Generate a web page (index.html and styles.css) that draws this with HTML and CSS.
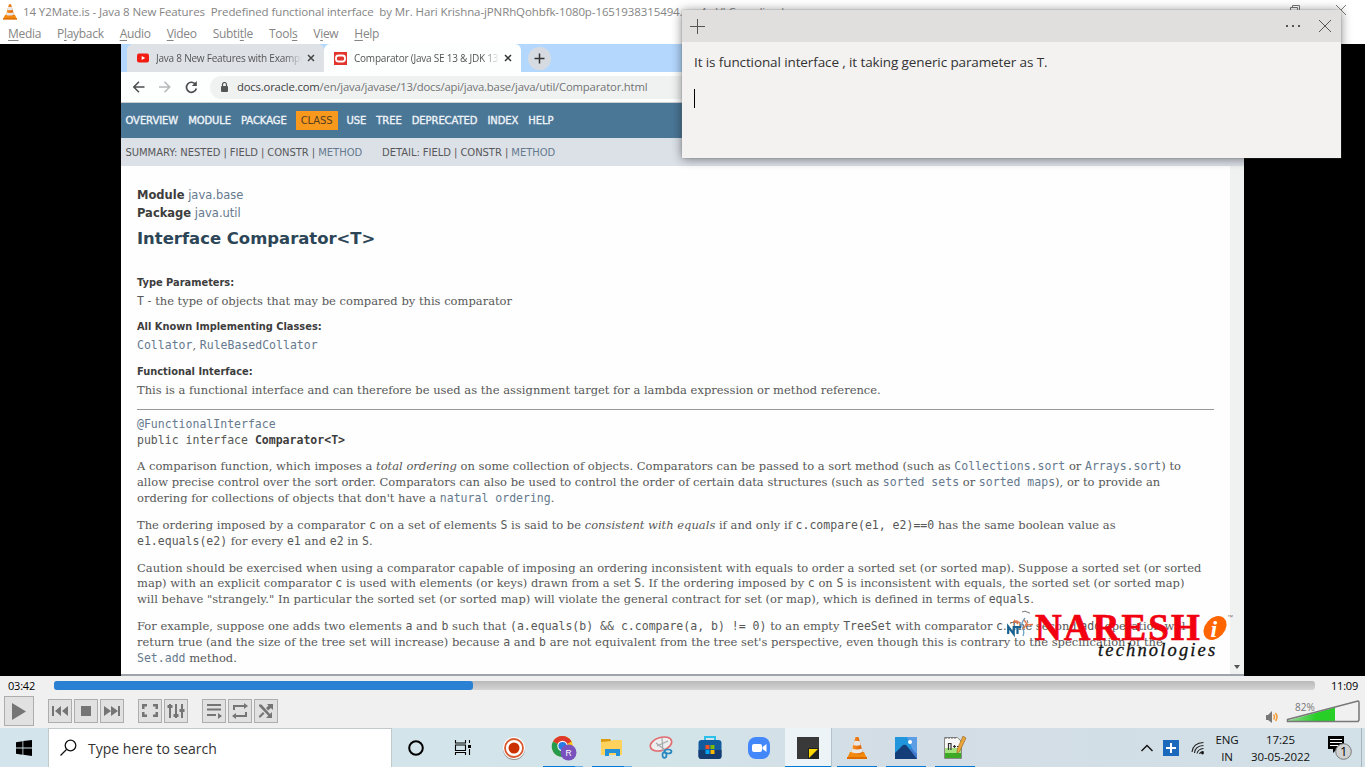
FILE: index.html
```html
<!DOCTYPE html>
<html lang="en">
<head>
<meta charset="utf-8">
<title>VLC media player</title>
<link rel="stylesheet" href="styles.css">
</head>
<body>
<svg width="0" height="0" class="defs">
  <defs>
    <linearGradient id="orange" x1="0" x2="1"><stop offset="0" stop-color="#ff9a2b"/><stop offset="1" stop-color="#d65a00"/></linearGradient>
    <symbol id="cone" viewBox="0 0 20 23">
      <path d="M3 16h14l3 6.500H0z" fill="#f28a10"/><path d="M0 21h20v2H0z" fill="#e06c00"/>
      <path d="M8.500 1h3l4.500 16q-6 3-12 0z" fill="url(#orange)"/>
      <path d="M7.400 5h5.200l1.100 4q-3.700 1.500-7.400 0zM5.300 12.500q4.700 2 9.400 0l1 3.500q-5.700 2.500-11.400 0z" fill="#e8e8e8"/>
    </symbol>
  </defs>
</svg>
<div class="desktop">
  <header class="titlebar">
    <svg class="title-cone"><use href="#cone"/></svg>
    <span class="title">14 Y2Mate.is - Java 8 New Features&nbsp; Predefined functional interface&nbsp; by Mr. Hari Krishna-jPNRhQohbfk-1080p-1651938315494.mp4 - VLC media player</span>
    <svg class="winbtns" width="60" height="20" fill="none" stroke="#777"><path d="M5.500 5.500h7v7h-7zM7.500 5.500v-2h7v7h-2M51 3l10 10M61 3l-10 10"/></svg>
  </header>
  <nav class="menubar">
    <span><u>M</u>edia</span><span>P<u>l</u>ayback</span><span><u>A</u>udio</span><span><u>V</u>ideo</span><span>Subti<u>t</u>le</span><span>Tool<u>s</u></span><span>V<u>i</u>ew</span><span><u>H</u>elp</span>
  </nav>
  <main class="video">
    <div class="frame">
      <div class="tabs">
        <div class="tab tab-one">
          <svg width="12" height="10"><rect width="12" height="9" y=".5" rx="2" fill="#f21c12"/><path d="M4.700 3v4l3.500-2z" fill="#fff"/></svg>
          <span class="tab-text">Java 8 New Features with Exampl</span>
          <svg class="tab-x" width="8" height="8" stroke="#444" stroke-width="1.500"><path d="M1 1l6 6M7 1l-6 6"/></svg>
        </div>
        <div class="tab tab-two">
          <svg width="13" height="13"><rect width="13" height="13" fill="#e2352d"/><rect x="2" y="3.500" width="9" height="6" rx="2.500" fill="none" stroke="#fff" stroke-width="1.800"/></svg>
          <span class="tab-text">Comparator (Java SE 13 &amp; JDK 13</span>
          <svg class="tab-x" width="8" height="8" stroke="#333" stroke-width="1.500"><path d="M1 1l6 6M7 1l-6 6"/></svg>
        </div>
        <div class="newtab"><svg width="11" height="11" stroke="#333" stroke-width="1.500"><path d="M5.500 .500v10M.5 5.500h10"/></svg></div>
      </div>
      <div class="toolbar">
        <svg width="72" height="14" fill="none" stroke-width="1.500"><path d="M12.500 7H2M7 1.800L1.800 7 7 12.200" stroke="#4a4c4f"/><path d="M27 7h10.500M32.500 1.800L37.700 7l-5.200 5.200" stroke="#b5b7b8"/><path d="M63.500 4.300a5 5 0 1 0 .8 4.200" stroke="#4a4c4f" stroke-width="1.700"/><path d="M64.800 1v5h-5z" fill="#4a4c4f"/></svg>
        <div class="omnibox"><svg width="8" height="10"><rect y="4" width="7" height="6" rx="1" fill="#555"/><path d="M1.500 4.500v-2a2 2 0 0 1 4 0v2" fill="none" stroke="#555" stroke-width="1.200"/></svg><span class="url"><b>docs.oracle.com</b>/en/java/javase/13/docs/api/java.base/java/util/Comparator.html</span></div>
      </div>
      <div class="topnav"><span>OVERVIEW</span><span>MODULE</span><span>PACKAGE</span><span class="active">CLASS</span><span>USE</span><span>TREE</span><span>DEPRECATED</span><span>INDEX</span><span>HELP</span></div>
      <div class="subnav"><span>SUMMARY: NESTED | FIELD | CONSTR | <a>METHOD</a></span><span>DETAIL: FIELD | CONSTR | <a>METHOD</a></span></div>
      <div class="page">
        <article class="doc">
          <div class="modline"><b>Module</b> <a>java.base</a></div>
          <div class="modline"><b>Package</b> <a>java.util</a></div>
          <h2>Interface Comparator&lt;T&gt;</h2>
          <dl>
            <dt>Type Parameters:</dt><dd><code>T</code> - the type of objects that may be compared by this comparator</dd>
            <dt>All Known Implementing Classes:</dt><dd><code><a>Collator</a></code>, <code><a>RuleBasedCollator</a></code></dd>
            <dt>Functional Interface:</dt><dd>This is a functional interface and can therefore be used as the assignment target for a lambda expression or method reference.</dd>
          </dl>
          <hr>
          <pre><a>@FunctionalInterface</a>
public interface <b>Comparator&lt;T&gt;</b></pre>
          <p>A comparison function, which imposes a <i>total ordering</i> on some collection of objects. Comparators can be passed to a sort method (such as <code><a>Collections.sort</a></code> or <code><a>Arrays.sort</a></code>) to<br>allow precise control over the sort order. Comparators can also be used to control the order of certain data structures (such as <code><a>sorted sets</a></code> or <code><a>sorted maps</a></code>), or to provide an<br>ordering for collections of objects that don't have a <code><a>natural ordering</a></code>.</p>
          <p>The ordering imposed by a comparator <code>c</code> on a set of elements <code>S</code> is said to be <i>consistent with equals</i> if and only if <code>c.compare(e1, e2)==0</code> has the same boolean value as<br><code>e1.equals(e2)</code> for every <code>e1</code> and <code>e2</code> in <code>S</code>.</p>
          <p>Caution should be exercised when using a comparator capable of imposing an ordering inconsistent with equals to order a sorted set (or sorted map). Suppose a sorted set (or sorted<br>map) with an explicit comparator <code>c</code> is used with elements (or keys) drawn from a set <code>S</code>. If the ordering imposed by <code>c</code> on <code>S</code> is inconsistent with equals, the sorted set (or sorted map)<br>will behave "strangely." In particular the sorted set (or sorted map) will violate the general contract for set (or map), which is defined in terms of <code>equals</code>.</p>
          <p>For example, suppose one adds two elements <code>a</code> and <code>b</code> such that <code>(a.equals(b) &amp;&amp; c.compare(a, b) != 0)</code> to an empty <code>TreeSet</code> with comparator <code>c</code>. The second <code>add</code> operation will<br>return true (and the size of the tree set will increase) because <code>a</code> and <code>b</code> are not equivalent from the tree set's perspective, even though this is contrary to the specification of the<br><code><a>Set.add</a></code> method.</p>
        </article>
        <div class="scroll"><svg width="6" height="4"><path d="M0 0h6L3 4z" fill="#555"/></svg></div>
      </div>
      <div class="logo">
        <svg width="30" height="32" viewBox="0 0 30 32" fill="none"><path d="M3.200 25v-7.500l5.500 7.500v-8M8 18.200h8M12.500 18v7" stroke="#17608f" stroke-width="2.200"/><path d="M20 9q-4 5-3 9 3 5 1 9" stroke="#6fa0c2" stroke-width="1.300"/><path d="M8 13l4-1 3 2M9 11l4 4M20 16l8-.5M19 11l3 4-4 5" stroke="#de7850" stroke-width="1.400"/><path d="M17 3l3-.8 5 2M22 11l1 3" stroke="#777"/></svg>
        <span class="naresh">NARESH</span>
        <svg class="logo-i" width="31" height="30"><ellipse cx="13" cy="16" rx="9.800" ry="13.300" transform="rotate(42 13 16)" fill="#ff6500"/><text x="8.500" y="25" class="i-text">i</text><text x="25" y="7" class="tm">™</text></svg>
        <span class="tech">technologies</span>
      </div>
    </div>
  </main>
  <section class="controls">
    <div class="seekrow"><span class="time">03:42</span><div class="seek"><div class="played"></div></div><span class="time">11:09</span></div>
    <div class="buttons">
      <div class="btn play"><svg width="28" height="28"><path d="M7 6l14 8.500L7 23z"/></svg></div>
      <div class="btn g1"><svg viewBox="0 0 22 22"><path d="M3 6h2v10H3zM12 6v10l-6-5zM19 6v10l-6-5z"/></svg></div>
      <div class="btn"><svg viewBox="0 0 22 22"><path d="M6 6h10v10H6z"/></svg></div>
      <div class="btn"><svg viewBox="0 0 22 22"><path d="M17 6h2v10h-2zM3 6v10l7-5zM10 6v10l7-5z"/></svg></div>
      <div class="btn g2"><svg viewBox="0 0 22 22"><path d="M3 4h5v2.500H5.500V9H3zM14 4h5v5h-2.500V6.500H14zM3 12h2.500v2.500H8V17H3zM16.500 12H19v5h-5v-2.500h2.500z"/></svg></div>
      <div class="btn"><svg viewBox="0 0 22 22"><path d="M4 4h2v14H4zM10 4h2v14h-2zM16 4h2v14h-2zM2.500 5h5v3h-5zM8.500 14h5v3h-5zM14.500 9h5v3h-5z"/></svg></div>
      <div class="btn g3"><svg viewBox="0 0 22 22"><path d="M4 4h14v2H4zM4 8.500h14v2H4zM4 14h9v2H4zM15 13l4 3-4 3z"/></svg></div>
      <div class="btn"><svg viewBox="0 0 22 22"><path d="M4 10V5h11V3l4 3-4 3V7H6v3zM18 12v5H7v2l-4-3 4-3v2h9v-3z"/></svg></div>
      <div class="btn"><svg viewBox="0 0 22 22"><path d="M4 4.500h2.500L15 14l2-2v6h-6l2.300-2.300L4 6zM4 16l4-4 1.500 1.500-4 4H4zM11 8l2.500-2.500L12 4h6v6l-2-2-3 2.500z"/></svg></div>
      <div class="volume">
        <svg width="14" height="14"><path d="M1 5h2l4-4v12L3 10H1z" fill="#777"/><path d="M8.500 4.500q2 2.500 0 5M10.500 3q3 4 0 8" fill="none" stroke="#f39a32" stroke-width="1.500"/></svg>
        <svg width="76" height="26"><defs><linearGradient id="vol"><stop stop-color="#96d596"/><stop offset=".6" stop-color="#27cf27"/></linearGradient></defs><path d="M3 21.500L50 8.500v13.500H3z" fill="url(#vol)"/><path d="M2.500 20.500L73 2q1 0 1 1.500V21l-1 1.500H2.500z" fill="none" stroke="#777" stroke-width="1.500"/><text x="10" y="12" class="voltext">82%</text></svg>
      </div>
    </div>
  </section>
  <footer class="taskbar">
    <div class="start"><svg width="16" height="16"><path d="M0 2.200L6.500 1.300V7.500H0zM7.300 1.100L16 0v7.500H7.300zM0 8.500h6.500v6.200L0 13.800zM7.300 8.500H16V16l-8.700-1.200z"/></svg></div>
    <div class="search"><svg width="18" height="18" fill="none" stroke="#111" stroke-width="1.300"><circle cx="10.500" cy="6.500" r="5.300"/><path d="M6.500 10.500L.5 16.500"/></svg><span>Type here to search</span></div>
    <div class="apps">
      <div class="app"><svg width="18" height="18"><circle cx="9" cy="9" r="6.800" fill="none" stroke="#000" stroke-width="2"/></svg></div>
      <div class="app taskview"><svg width="18" height="18" fill="none" stroke="#000" stroke-width="1.100"><path d="M1.500 1v3h10V1M1.500 16v-2.500h10V16M1.500 6h10v5.500h-10zM15.500 1v3M15.500 10v6"/><path d="M14 6h3v3h-3z" fill="#000" stroke="none"/></svg></div>
      <div class="app"><svg width="24" height="24"><circle cx="12" cy="13" r="11" fill="#8f8b89"/><circle cx="12" cy="12" r="11" fill="#fff"/><circle cx="12" cy="12" r="9" fill="none" stroke="#d8592f" stroke-width="1.800"/><circle cx="12" cy="12" r="5.500" fill="#cb3003"/></svg></div>
      <div class="app run split"><svg class="chrome" width="26" height="26"><circle cx="11.500" cy="11.500" r="10.500" fill="#fbc116"/><path d="M11.500 11.500L2 6.500a10.500 10.500 0 0 1 18.500 0z" fill="#df392b"/><path d="M11.500 11.500L2 6.500a10.500 10.500 0 0 0 9 15.500z" fill="#279b4c"/><circle cx="11.500" cy="11" r="5.200" fill="#fff"/><circle cx="11.500" cy="11" r="4.100" fill="#287be5"/><circle cx="17.500" cy="17.500" r="8" fill="#7952bd"/><text x="14.500" y="20.700" class="badge-r">R</text></svg></div>
      <div class="app run split"><svg width="24" height="22"><path d="M1 2h9l2 3H1z" fill="#d99a0d"/><path d="M1 5l11-1 1-1h9v15H1z" fill="#ffd25d"/><path d="M5 12h15v7h-4v-3H9v3H5z" fill="#2490d8"/></svg></div>
      <div class="app"><svg width="26" height="26" fill="none"><ellipse cx="13" cy="9" rx="11" ry="6.500" transform="rotate(-17 13 9)" fill="#eee" stroke="#e06b70" stroke-width="1.600"/><path d="M14 3l1 13M8 8l9 7M9 11l11-5" stroke="#a5a9ab" stroke-width="1.200"/><ellipse cx="20" cy="16.500" rx="3.500" ry="2" stroke="#2686be" stroke-width="1.700"/><ellipse cx="16.500" cy="20" rx="2" ry="2.800" stroke="#2686be" stroke-width="1.700"/></svg></div>
      <div class="app"><svg width="24" height="25"><path d="M7 6V2h10v4" fill="none" stroke="#2cc1eb" stroke-width="2"/><rect x=".5" y="5" width="23" height="19" rx="3" fill="#125b9d"/><path d="M.5 15h23v6q0 3-3 3h-17q-3 0-3-3z" fill="#173c70"/><path d="M7.500 10h4v4h-4z" fill="#f25022"/><path d="M12.500 10h4v4h-4z" fill="#7fba00"/><path d="M7.500 15h4v4h-4z" fill="#00a4ef"/><path d="M12.500 15h4v4h-4z" fill="#ffb900"/></svg></div>
      <div class="app"><svg width="24" height="24"><rect x="1" y="1" width="22" height="22" rx="8" fill="#4388fa"/><rect x="5" y="8" width="10" height="8" rx="2" fill="#fff"/><path d="M15.500 11l4-3v8l-4-3z" fill="#fff"/></svg></div>
      <div class="app selected run"><svg width="22" height="22"><path d="M0 0h22v11L11 22H0z" fill="#393939"/><path d="M11 11h11v11H11z" fill="#222"/><path d="M12 12h9l-9 9z" fill="#ffd800"/></svg></div>
      <div class="app run"><svg width="20" height="23"><use href="#cone"/></svg></div>
      <div class="app run"><svg width="22" height="22"><rect width="22" height="22" fill="#2196dc"/><path d="M12 0h10v22z" fill="#5c9de6"/><path d="M14 13l2-2 6 6v5h-8z" fill="#4279cf"/><path d="M0 16l8-8q2-1 4 1l10 13H0z" fill="#153e79"/><circle cx="15" cy="5" r="2" fill="#fff"/></svg></div>
      <div class="app run"><svg width="24" height="24"><path d="M1.500 1.500h13l4 4v17h-17z" fill="#a5e37f" stroke="#888"/><path d="M2 2h12.500l3.500 4v6H2z" fill="#f7f7f7"/><path d="M3 1v2M6 1v2M9 1v2M12 1v2" stroke="#666"/><path d="M2 17h16v5H2z" fill="#3caa25"/><path d="M5.500 14V7.500H8V14M10 10.500h3M11.500 9v3M14 10.500h2" stroke="#333" fill="none" stroke-width="1.200"/><path d="M20 0l3 2-6 13-3 2.500.3-4.500z" fill="#e9a43b" stroke="#93621e" stroke-width=".6"/></svg></div>
    </div>
    <div class="tray">
      <svg width="12" height="8" fill="none" stroke="#111" stroke-width="1.400"><path d="M.5 7L6 1.500 11.500 7"/></svg>
      <svg width="16" height="16"><path d="M0 0h16v16H0z" fill="#1b69bd"/><path d="M8 3v10M3 8h10" stroke="#fff" stroke-width="2"/></svg>
      <svg class="wifi" width="14" height="14" fill="none" stroke="#222" stroke-width="1.100"><path d="M1 11Q2 2 12.500 1.500M3.500 12Q4 5 12.500 4.500M6 12.500Q7 8 12.500 7.500M8.500 13q1-2.500 4-2.500"/><circle cx="11.500" cy="12" r="1.400" fill="#111" stroke="none"/></svg>
      <div class="lang">ENG<br>IN</div><div class="clock">17:25<br>30-05-2022</div>
      <svg class="action" width="26" height="26"><path d="M1 1h16v13h-7l-4 4v-4H1z"/><path d="M3 4.500h12M3 7.500h12M3 10.500h9" stroke="#fff"/><circle cx="16.500" cy="16.500" r="7.800" fill="#d0d2d2" stroke="#777"/><text x="13" y="21" class="notif">1</text></svg>
    </div>
    <div class="showdesk"></div>
  </footer>
  <aside class="note">
    <div class="note-head"><svg width="15" height="15" stroke="#555"><path d="M7.500 0v15M0 7.500h15"/></svg><svg width="50" height="14" stroke="#555" fill="none"><path d="M37 1l12 12M49 1L37 13"/><path d="M4 6h2v2H4zM10 6h2v2h-2zM16 6h2v2h-2z" fill="#555" stroke="none"/></svg></div>
    <div class="note-body"><div class="note-text">It is functional interface , it taking generic parameter as T.</div><div class="caret"></div></div>
  </aside>
</div>
</body>
</html>
```
FILE: styles.css
```css
* { box-sizing: border-box; }
body { margin: 0; overflow: hidden; font-family: "Open Sans", "Noto Sans", sans-serif; }
.defs { position: absolute; }
svg { display: block; flex: none; }
.desktop { position: relative; width: 1365px; height: 767px; display: flex; flex-direction: column; background: #fff; overflow: hidden; white-space: nowrap; }

.titlebar { height: 23px; display: flex; align-items: center; padding-left: 3px; color: #858585; }
.title-cone { width: 14px; height: 17px; margin-right: 6px; }
.title { font-size: 11.5px; letter-spacing: -.1px; }
.winbtns { margin-left: auto; margin-right: 20px; overflow: visible; }
.menubar { height: 21px; display: flex; gap: 16px; padding: 2px 0 0 8px; font-size: 12px; line-height: 17px; color: #858585; letter-spacing: -.3px; }
.menubar u { text-underline-offset: 2px; }

.video { height: 632px; padding: 0 121px; background: #000; }
.frame { position: relative; width: 1123px; height: 632px; display: flex; flex-direction: column; background: #fdfefd; overflow: hidden; color: #585858; }
.tabs { height: 28px; display: flex; background: #b3d7fd; padding-left: 6px; font-size: 10px; }
.tab { display: flex; align-items: center; height: 28px; padding: 0 9px 0 10px; border-radius: 6px 6px 0 0; }
.tab-one { width: 197px; background: #dee1e6; }
.tab-two { width: 197px; background: #fdfefe; }
.tab-text { width: 146px; margin-left: 7px; letter-spacing: -.22px; mask-image: linear-gradient(90deg, #000 88%, transparent 100%); color: #555; }
.tab-x { margin-left: auto; }
.newtab { width: 23px; height: 23px; border-radius: 50%; background: #d6dbe2; margin: 3px 0 0 7px; display: flex; align-items: center; justify-content: center; }
.toolbar { height: 31px; display: flex; align-items: center; padding-left: 11px; border-bottom: 1px solid #ccd0d2; background: #fdfefe; }
.omnibox { flex: 1; height: 23px; margin-left: 6px; padding: 0 0 1px 11px; display: flex; align-items: center; gap: 8px; border-radius: 12px 0 0 12px; background: #f0f2f2; font-size: 11.3px; letter-spacing: -.19px; color: #707274; }
.url b { font-weight: 400; color: #3e4043; }
.topnav { height: 35px; background: #4b7797; color: #eef4f8; display: flex; align-items: center; gap: 10px; padding-left: 4.500px; font: 10px "DejaVu Sans", sans-serif; letter-spacing: -.08px; -webkit-text-stroke: .35px currentColor; }
.active { background: #f8981d; color: #574020; padding: 4px 5px; margin: 0 -1px; -webkit-text-stroke: 0; }
.subnav { height: 28px; background: #dce1e8; display: flex; align-items: center; gap: 20px; padding-left: 4.500px; font: 10px "DejaVu Sans", sans-serif; letter-spacing: -.06px; }
a { color: #66798e; }
.page { flex: 1; display: flex; border-bottom: 2px solid #9ea4aa; min-height: 0; }
.doc { width: 1109px; padding: 20px 16px 0 16px; font: 11.5px/15.7px "DejaVu Serif", serif; }
.modline { font: 11.5px/18px "DejaVu Sans", sans-serif; }
.modline b, dt, pre b { color: #3d3d3d; }
.doc h2 { margin: 7px 0 0; font: 700 16.45px/20px "DejaVu Sans", sans-serif; color: #2c4557; }
dl { margin: 26px 0 0; }
dt { font: 700 9.85px/16px "DejaVu Sans", sans-serif; }
dd { margin: 2px 0 10.400px; line-height: 16px; }
.doc hr { margin: 11px 0 7px; border: 0; border-top: 1px solid #999; height: 1px; }
code, pre { font: 11.52px/15.7px "DejaVu Sans Mono", monospace; line-height: 1; }
pre { margin: 0 0 11px; line-height: 15.8px; }
.doc p { margin: 0 0 11.400px; }
.scroll { width: 14px; background: #f0f1f1; display: flex; align-items: flex-end; justify-content: center; padding-bottom: 5px; }
.logo { position: absolute; left: 884px; top: 565px; width: 230px; height: 60px; display: flex; }
.naresh { font: 700 37px/37px "Liberation Serif", serif; letter-spacing: 2.100px; color: #f20010; margin-top: 0; -webkit-text-stroke: .7px #f20010; }
.logo-i { margin-left: 0; margin-top: 3px; }
.i-text { font: italic 700 24px "Liberation Serif", serif; fill: #fff; }
.tm { font: 6px "Liberation Sans", sans-serif; fill: #777; }
.tech { position: absolute; left: 93px; top: 31px; font: italic 18.5px/20px "Liberation Serif", serif; letter-spacing: 2.150px; color: #111; -webkit-text-stroke: .3px #111; }

.controls { height: 52px; background: #f0f0f0; }
.seekrow { display: flex; height: 19px; align-items: center; padding: 0 4px 0 8px; font-size: 11px; color: #000; }
.time { width: 30px; letter-spacing: -.2px; }
.seek { flex: none; height: 9px; width: 1261px; margin: 0 16px 1px 16px; border-radius: 3px; background: linear-gradient(#b9b9b9, #d5d5d5); }
.played { width: 419px; height: 9px; border-radius: 3px; background: #2a80d2; }
.buttons { display: flex; align-items: center; height: 32px; padding-left: 4px; }
.btn { width: 24px; height: 24px; margin-right: 2px; border: 1px solid #adadad; background: #e1e1e1; }
.btn svg { fill: #757575; }
.play { width: 30px; height: 30px; margin-right: 0; }
.g1 { margin-left: 14px; }
.g2, .g3 { margin-left: 12px; }
.volume { display: flex; align-items: flex-end; margin-left: auto; gap: 6px; padding: 0 4px 1px 0; height: 30px; }
.volume svg:first-child { margin-bottom: 1px; }
.voltext { font: 10px "Open Sans", sans-serif; fill: #777; }

.taskbar { height: 39px; display: flex; background: linear-gradient(90deg, #d3e4ec, #d3e4e9 50%, #d3dde5 65%, #d2e0e7); }
.start { width: 48px; display: flex; align-items: center; justify-content: center; }
.search { width: 344px; background: #fff; border: 1px solid #c3c8ca; border-bottom: 0; display: flex; align-items: center; gap: 10px; padding-left: 11px; font-size: 14px; letter-spacing: 0; color: #333; }
.apps { display: flex; }
.app { width: 49px; display: flex; align-items: center; justify-content: center; position: relative; }
.app:first-child { margin-left: -1px; }
.taskview { left: -2px; }
.chrome { margin-left: 3px; }
.run::after { content: ""; position: absolute; left: 5px; bottom: 0; width: 40px; height: 1px; background: #0078d7; }
.split::after { background: linear-gradient(90deg, #0078d7 80%, #65aee6 80%); }
.selected { background: #edf4f8; border-right: 1px solid #b4c2cc; margin-left: 2px; width: 47px; }
.selected::after { left: 0; width: 46px; }
.selected ~ .app:not(.selected) { margin-left: 0; }
.selected + .app { padding-left: 1px; }
.tray { margin-left: auto; display: flex; align-items: center; padding-right: 8px; color: #111; font-size: 11.5px; line-height: 17px; text-align: center; gap: 10px; }
.wifi { margin-left: 2px; }
.lang { letter-spacing: -.2px; width: 24px; margin-right: 2px; }
.clock { letter-spacing: -.1px; margin-right: 7px; }
.showdesk { width: 4px; border-left: 1px solid #a9b5bc; }
.notif { font: 13px "Open Sans", sans-serif; }
.badge-r { font: 8.500px "Liberation Sans", sans-serif; fill: #fff; }

.note { position: absolute; left: 682px; top: 10px; width: 659px; height: 148px; background: #f3f2f1; box-shadow: 0 1px 10px rgba(0,0,0,.48), 0 0 1px #999; }
.note-head { height: 32px; background: #e0dfde; display: flex; justify-content: space-between; align-items: center; padding: 0 9px 0 8px; }
.note-body { padding: 10px 12px; color: #333; font-size: 13.5px; line-height: 20px; }
.note-text { letter-spacing: -.11px; }
.caret { width: 1px; height: 19px; margin-top: 17px; background: #000; }
```
